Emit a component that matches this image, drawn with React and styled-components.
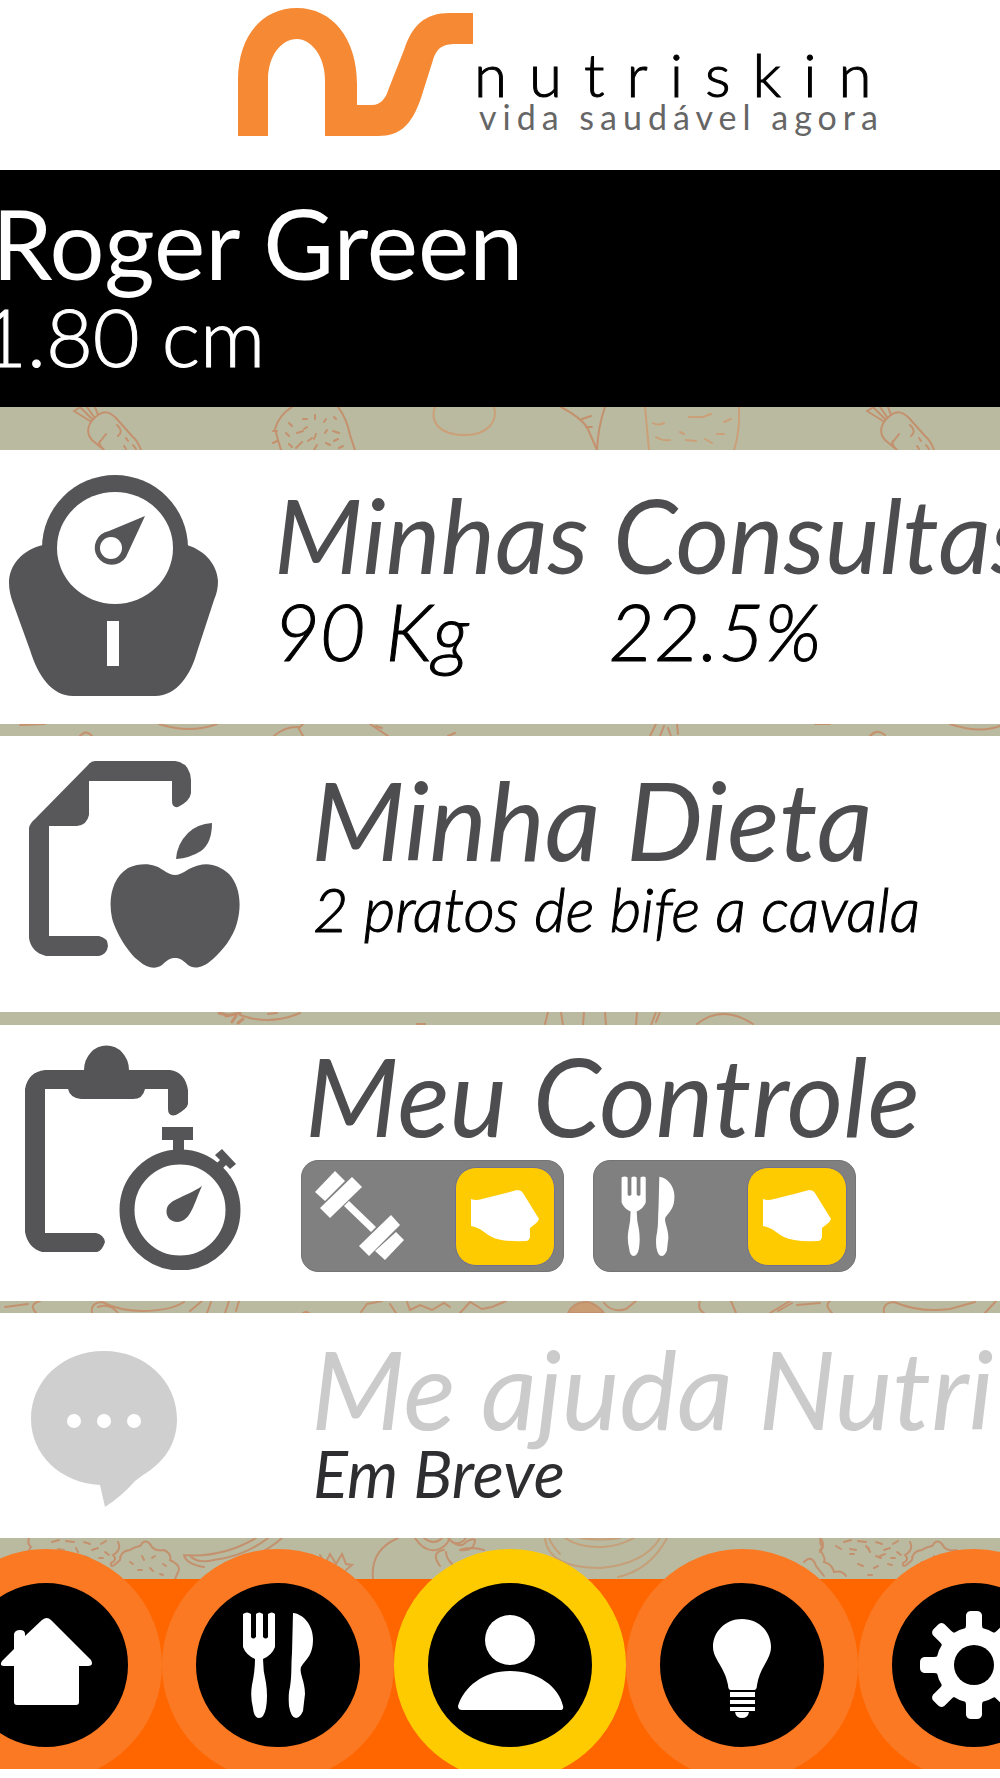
import React, { useState } from 'react';
import styled, { createGlobalStyle } from 'styled-components';

const NAV_ITEMS = [
  { id: 'home', label: 'Início' },
  { id: 'meals', label: 'Refeições' },
  { id: 'profile', label: 'Perfil', active: true },
  { id: 'tips', label: 'Dicas' },
  { id: 'settings', label: 'Ajustes' },
];

const App = () => (
  <Page>
    <GlobalStyle />

    <Header>
      <LogoMark />
      <LogoText>
        <LogoName>nutriskin</LogoName>
        <LogoTagline>vida saudável agora</LogoTagline>
      </LogoText>
    </Header>

    <Profile>
      <ProfileName>Roger Green</ProfileName>
      <ProfileHeight>1.80 cm</ProfileHeight>
    </Profile>

    <main>
      <Strip height={43}>
        <Doodles>
          <g id="carrot">
            <path d="M74 4L90 14M80 0L92 12M87 0L94 10M95 0L98 8M74 4L79 1M98 8C88 15 85 25 92 33L104 43M98 8C104 3 110 5 116 11L132 29Q138 34 141 43M104 43Q98 37 100 34M106 27L99 36M117 18Q124 24 118 29M126 31l2 3M124 39l2 3M133 38l3 4" />
          </g>
          <use href="#carrot" x="793" />
          <path d="M292 0Q279 8 275 22Q278 33 281 43M338 0Q347 12 350 28L355 43M273 36l4 -2M273 24l4 0M289 16l3 3M303 12l4 0M315 8l0 4M324 15l2 -3M286 26l3 3M297 26l6 -2M316 27l-2 5M325 26l2 -3M333 24l6 2M289 37l3 3M296 41l6 -6M308 34l4 -3M317 38l-3 5M326 36l4 2M334 34l4 -2M339 41l4 -2M304 22l3 -2M334 10l2 2" />
          <g stroke="#cba078">
            <path d="M435 0C430 14 438 28 465 28C488 28 498 14 494 0" />
            <path d="M645 0L649 43M739 0Q740 25 734 43M653 16Q658 19 664 16M689 10h14l8 -3M724 15l7 -3M656 30q6 4 14 3M680 25l4 2M686 33l10 1M705 32l7 4M717 27l7 0" />
          </g>
          <path d="M561 0Q580 10 587 20L597 43M605 0Q598 20 597 43M582 12L591 9M586 20L592 20" />
        </Doodles>
      </Strip>

      <Card height={274} column={274}>
        <IconCell top={24} left={9}>
          <ScaleIcon />
        </IconCell>
        <CardText top={29}>
          <CardTitle size={103}>Minhas Consultas</CardTitle>
          <Values>
            <span>90 Kg</span>
            <span>22.5%</span>
          </Values>
        </CardText>
      </Card>

      <Strip height={12}>
        <Doodles>
          <path d="M159 0Q190 10 217 0M20 1L45 0M80 12Q86 5 92 12M274 12Q285 2 300 3L303 0M298 3L303 12M370 0L388 12M376 2L382 4M448 12L455 9M650 12L656 0M660 12L664 2M668 4L671 12M677 0L678 10M870 12Q877 4 885 11M815 0L830 0M950 0Q980 10 1000 2" />
        </Doodles>
      </Strip>

      <Card height={276} column={311}>
        <IconCell top={24} left={29}>
          <DietIcon />
        </IconCell>
        <CardText top={28}>
          <CardTitle>Minha Dieta</CardTitle>
          <Meal>2 pratos de bife a cavala</Meal>
        </CardText>
      </Card>

      <Strip height={13}>
        <Doodles>
          <path
            strokeWidth="3"
            d="M219 1L227 3M226 4L240 1M232 10L236 4M238 11L243 7"
          />
          <path d="M240 3Q270 14 300 1M268 2L277 1M417 12L425 12M545 12L548 0M561 0L563 13M584 0L583 13M605 0L606 13M637 0L636 13M651 13L656 0M656 10L660 0M697 12Q722 -8 753 12" />
        </Doodles>
      </Strip>

      <Card height={276} column={305}>
        <IconCell top={20} left={25}>
          <ControlIcon />
        </IconCell>
        <CardText top={15}>
          <CardTitle>Meu Controle</CardTitle>
          <Switches>
            <Switch label="Treino">
              <DumbbellIcon />
            </Switch>
            <Switch label="Alimentação">
              <CutleryIcon width={54} height={80} />
            </Switch>
          </Switches>
        </CardText>
      </Card>

      <Strip height={12}>
        <Doodles>
          <path d="M5 6L28 3M40 0Q28 3 36 12M92 12Q90 2 102 1Q120 10 142 10Q170 10 184 1M98 6Q110 2 118 12M190 10L202 0M207 12L211 1M225 12L229 0M236 10L239 0M303 12Q306 10 309 12M361 11L367 3L382 0M390 3L396 12M407 1L410 9L420 4L432 9L444 2L450 6M460 12L470 1L482 8L492 6L506 0M604 2Q612 12 626 8L636 0M700 0Q697 8 704 12M731 0L736 12M770 12L790 0M778 10L792 2M797 4L820 2M830 0Q824 4 832 12M884 12Q882 2 894 1Q920 12 950 8L975 1M985 12L996 0" />
          <path fill="#c99c74" d="M568 12Q574 0 588 1Q598 4 604 12Z" />
        </Doodles>
      </Strip>

      <Card height={225} column={311}>
        <IconCell top={38} left={31}>
          <ChatIcon />
        </IconCell>
        <CardText top={20}>
          <CardTitle muted>Me ajuda Nutri</CardTitle>
          <Soon>Em Breve</Soon>
        </CardText>
      </Card>

      <Strip height={41}>
        <Doodles>
          <g id="broccoli">
            <path d="M29 0Q27 6 31 9L28 14M118 4Q122 12 113 17Q118 22 111 25Q110 32 120 22Q120 13 130 12Q134 9 140 8Q145 0 150 6Q154 14 164 12Q172 16 170 22Q182 28 178 34L175 41M52 4l7 -2M66 3l8 1M84 4l6 2M101 6l5 -3M58 11l6 1M76 10l2 4M92 12l6 -2M105 14l4 3M84 18l5 2M99 20l4 0M130 24l3 2M142 18l2 4M152 20l3 -2M138 32l4 0M150 30l3 3M163 26l3 2M160 36l3 1" />
          </g>
          <use href="#broccoli" x="792" />
          <path d="M820 0Q826 6 820 12Q826 20 824 24Q832 26 834 34Q842 32 846 38M804 24Q812 16 816 28L824 38M836 8l5 3M850 16l4 0M866 8l3 3M880 18l5 -2M858 26l5 2M874 30l4 -2M888 26l4 1M868 37l4 0" />
          <path d="M184 17Q222 20 256 0M184 17Q186 26 204 29M190 18Q198 26 214 22M214 22Q245 18 268 0M228 27Q262 18 282 0M320 17L325 26L330 16L336 26L342 16L346 26L352 27L346 32" />
          <path d="M373 41Q370 12 398 0M415 0Q424 14 436 12Q446 10 450 0M424 0Q434 8 442 0M448 0Q460 12 466 4Q472 0 475 2Q474 14 460 12M452 4Q460 8 466 0M460 12Q470 8 484 12M444 12Q430 14 440 28M446 14Q446 20 452 26" />
          <g stroke="#c59f78">
            <path d="M545 0Q548 30 600 30Q645 26 660 0M549 0Q552 8 560 16M565 0Q580 10 602 9Q620 8 634 0M580 0Q600 3 620 0M618 39Q650 32 667 0" />
          </g>
        </Doodles>
      </Strip>
    </main>

    <Nav aria-label="Principal">
      {NAV_ITEMS.map(({ id, label, active }) => (
        <NavLink
          key={id}
          href={`#${id}`}
          aria-label={label}
          aria-current={active ? 'page' : undefined}
          $active={active}
        >
          <NavIcon name={id} />
        </NavLink>
      ))}
    </Nav>
  </Page>
);

export default App;

const Switch = ({ label, children }) => {
  const [on, setOn] = useState(true);

  return (
    <SwitchBox>
      <SwitchInput
        type="checkbox"
        aria-label={label}
        checked={on}
        onChange={() => setOn(!on)}
      />
      <SwitchPicture>{children}</SwitchPicture>
      <Knob $on={on}>
        <FistIcon />
      </Knob>
    </SwitchBox>
  );
};

const Strip = ({ height, children }) => (
  <StripBox $height={height}>{children}</StripBox>
);

const Doodles = ({ children }) => (
  <svg width="1000" height="43" viewBox="0 0 1000 43" aria-hidden="true">
    <g fill="none" stroke="#c4916e" strokeWidth="2" strokeLinecap="round">
      {children}
    </g>
  </svg>
);

const Card = ({ height, column, children }) => (
  <CardBox $height={height} $column={column}>
    {children}
  </CardBox>
);

const IconCell = ({ top, left, children }) => (
  <IconBox $top={top} $left={left}>
    {children}
  </IconBox>
);

const CardText = ({ top, children }) => <TextBox $top={top}>{children}</TextBox>;

const CardTitle = ({ size = 109, muted, children }) => (
  <Title $size={size} $muted={muted}>
    {children}
  </Title>
);

const LogoMark = () => (
  <svg width="235" height="128" viewBox="238 8 235 128" aria-hidden="true">
    <path
      fill="#f68933"
      d="M238 136V80C238 36 262 8 297 8C332 8 357 38 357 84V105H372C381 105 386 98 389 88L404 50C412 26 424 13 450 13H473V44H456C442 44 437 48 433 60L421 98C412 124 401 136 378 136H325V80C325 56 311 39 297 39C281 39 268 56 268 80V136Z"
    />
  </svg>
);

const ScaleIcon = () => (
  <svg width="210" height="223" viewBox="9 24 210 223" aria-hidden="true">
    <g fill="#555557">
      <circle cx="115" cy="98" r="73" />
      <path d="M43 95C22 100 9 115 9 133Q9 142 13 153L30 200C38 226 52 246 73 246H155C177 246 191 224 197 202L214 150Q218 141 218 131C217 115 206 101 187 95Z" />
    </g>
    <ellipse cx="115" cy="98" rx="58" ry="56" fill="#fff" />
    <path
      fill="#555557"
      d="M145 66L109 81A17 17 0 1 0 126 107Z"
    />
    <circle cx="111" cy="98" r="11" fill="#fff" />
    <path fill="#fff" d="M107 171H119V216H107Z" />
  </svg>
);

const DietIcon = () => (
  <svg width="212" height="210" viewBox="29 20 212 210" aria-hidden="true">
    <g fill="#58585a">
      <path d="M95 21H175Q190 23 191 40V53Q190 61 178 67Q172 68 172 61V41H89V75Q87 85 77 86H49V196H99Q108 198 108 206Q107 214 99 216H46Q31 212 29 198V88Q30 83 35 79L88 25Q91 21 95 21Z" />
      <path d="M212 83Q212 103 201 111Q190 118 176 119Q177 104 188 93Q197 84 212 83Z" />
      <path d="M175 135Q180 135 189 129C204 121 217 123 229 134C240 146 242 165 237 183C233 198 222 211 213 219C202 229 193 229 188 225C182 219 179 218 175 218C171 218 168 219 162 225C155 230 147 228 139 221C128 213 115 191 112 178C108 159 112 138 128 128C144 121 156 125 163 130Q170 135 175 135Z" />
    </g>
  </svg>
);

const ControlIcon = () => (
  <svg width="216" height="225" viewBox="25 25 216 225" aria-hidden="true">
    <g fill="#555557">
      <path d="M45 50H84A22 24 0 0 1 129 50H170Q185 52 188 70V84Q187 89 176 95Q168 97 168 89V69H145Q143 79 133 79H81Q70 78 68 69H45V213H96Q104 215 105 222Q102 231 97 232H42Q28 228 25 212V69Q28 52 45 50Z" />
      <path d="M162 107H193V120H184V133H173V120H162Z" />
      <path d="M222 129L236 144L230 149L226 145L222 149L216 144L220 140L215 135Z" />
      <path d="M202 166C194 183 191 201 178 202C169 202 165 195 167 188C170 179 184 178 202 166Z" />
    </g>
    <circle
      cx="180"
      cy="190"
      r="53"
      fill="none"
      stroke="#555557"
      strokeWidth="15"
    />
  </svg>
);

const ChatIcon = () => (
  <svg width="146" height="156" viewBox="31 51 146 156" aria-hidden="true">
    <path
      fill="#cfcfcf"
      d="M104 51C146 51 177 82 177 119C177 145 163 163 143 175L135 181Q122 196 105 207L100 185C60 183 31 154 31 119C31 81 62 51 104 51Z"
    />
    <g fill="#fff">
      <circle cx="74" cy="121" r="7" />
      <circle cx="104" cy="121" r="7" />
      <circle cx="134" cy="121" r="7" />
    </g>
  </svg>
);

const DumbbellIcon = () => (
  <svg width="91" height="90" viewBox="12 12 91 90" aria-hidden="true">
    <g fill="#fff">
      <path d="M33 12L43 22L23 42L13 33Z" />
      <path d="M50 18L60 28L28 59L18 49Z" />
      <path d="M47 42L74 68L69 73L42 47Z" />
      <path d="M89 56L98 66L67 97L57 87Z" />
      <path d="M94 73L102 81L83 101L73 92Z" />
    </g>
  </svg>
);

const FistIcon = () => (
  <svg width="68" height="52" viewBox="173 30 68 52" aria-hidden="true">
    <path
      fill="#fff"
      d="M173 39Q178 41 184 39L208 33L219 30Q223 30 225 33L241 59Q240 62 237 64L232 68V77Q231 81 228 81Q203 82 194 77C187 74 184 68 173 66Z"
    />
  </svg>
);

const CutleryIcon = ({ width, height }) => (
  <svg width={width} height={height} viewBox="81 64 70 106" aria-hidden="true">
    <g fill="#fff">
      <path d="M81 66Q85 63 89 66V89Q91 92 94 89V66Q97 63 101 66V89Q104 92 106 89V66Q110 63 113 66V99Q110 107 101 111Q101 123 104 135Q106 148 104 160Q102 170 97 170Q92 170 91 160Q88 148 90 137Q93 123 93 111Q84 107 81 99Z" />
      <path d="M131 65C142 66 151 78 151 91C151 107 145 110 139 119C137 125 143 133 143 146Q142 154 141 163Q138 170 134 170Q129 170 127 158Q126 146 128 139C130 127 129 117 130 105Z" />
    </g>
  </svg>
);

const NavIcon = ({ name }) => {
  if (name === 'meals') {
    return <CutleryIcon width={70} height={106} />;
  }

  return (
    <svg width="164" height="164" viewBox="34 34 164 164" aria-hidden="true">
      <g fill="#fff">
        {name === 'home' && (
          <path d="M112 71Q117 67 121 71L161 111Q164 117 158 117H149V153Q149 156 146 156H87Q84 156 84 153V117H74Q69 117 72 112L84 100V85Q85 81 90 81Q95 81 95 85V87Z" />
        )}
        {name === 'profile' && (
          <>
            <circle cx="116" cy="91" r="25" />
            <path d="M68 161Q64 161 64 157C70 138 89 122 116 122C144 122 165 138 169 157Q170 161 166 161Z" />
          </>
        )}
        {name === 'tips' && (
          <>
            <path d="M116 70C133 70 145 83 145 98C145 110 134 118 131 136Q131 141 128 141H105Q102 141 102 136C99 118 87 110 87 98C87 83 99 70 116 70Z" />
            <path d="M104 143H129V148H104ZM104 151H129V155H104ZM104 158H129V162H104ZM109 163H123Q122 169 116 169Q110 169 109 163Z" />
          </>
        )}
        {name === 'settings' && (
          <>
            <circle cx="116" cy="116" r="38" />
            {[0, 45, 90, 135, 180, 225, 270, 315].map(angle => (
              <path
                key={angle}
                transform={`rotate(${angle} 116 116)`}
                d="M104 84Q108 80 108 76V66Q109 62 113 62H119Q123 62 124 66V76Q124 80 128 84Z"
              />
            ))}
            <circle cx="116" cy="116" r="20" fill="#000" />
          </>
        )}
      </g>
    </svg>
  );
};

const GlobalStyle = createGlobalStyle`
  body {
    margin: 0;
    background: #fff;
    font-family: Lato, 'Open Sans', sans-serif;
  }

  svg {
    display: block;
    flex-shrink: 0;
  }
`;

const Page = styled.div`
  overflow: hidden;
  padding-bottom: 9px;
`;

const Header = styled.header`
  display: flex;
  align-items: flex-end;
  padding: 8px 0 34px 238px;
`;

const LogoText = styled.div`
  padding-bottom: 4px;
  white-space: nowrap;
`;

const LogoName = styled.div`
  padding-left: 1px;
  font-size: 60px;
  font-weight: 300;
  line-height: 56px;
  letter-spacing: 22px;
  color: #000;
  -webkit-text-stroke: 1px #000;
`;

const LogoTagline = styled.div`
  padding-left: 6px;
  font-size: 34px;
  line-height: 30px;
  letter-spacing: 6px;
  color: #666;
`;

const Profile = styled.section`
  padding: 25px 0 26px;
  background: #000;
  color: #fff;
  white-space: nowrap;
`;

const ProfileName = styled.h1`
  margin: 0 0 0 -8px;
  font-size: 97px;
  font-weight: 400;
  line-height: 96px;
`;

const ProfileHeight = styled.p`
  margin: 0 0 0 -20px;
  font-size: 81px;
  font-weight: 300;
  line-height: 90px;
  -webkit-text-stroke: 1px #fff;
`;

const StripBox = styled.div`
  height: ${({ $height }) => $height}px;
  overflow: hidden;
  background: #babaa0;
`;

const CardBox = styled.section`
  display: grid;
  grid-template-columns: ${({ $column }) => $column}px 1fr;
  box-sizing: border-box;
  min-height: ${({ $height }) => $height}px;
  background: #fff;
`;

const IconBox = styled.div`
  padding: ${({ $top, $left }) => `${$top}px 0 0 ${$left}px`};
`;

const TextBox = styled.div`
  min-width: 0;
  padding-top: ${({ $top }) => $top}px;
  font-style: italic;
  white-space: nowrap;
`;

const Title = styled.h2`
  margin: 0;
  font-size: ${({ $size }) => $size}px;
  font-weight: 400;
  line-height: 110px;
  color: ${({ $muted }) => ($muted ? '#cbcbcb' : '#4d4d4f')};
`;

const Values = styled.div`
  display: flex;
  gap: 140px;
  font-size: 79px;
  font-weight: 300;
  line-height: 84px;
  color: #000;
  -webkit-text-stroke: 1px #000;
`;

const Meal = styled.div`
  padding-left: 2px;
  font-size: 61px;
  font-weight: 300;
  line-height: 70px;
  color: #000;
  -webkit-text-stroke: 1px #000;
`;

const Soon = styled.div`
  padding-left: 2px;
  font-size: 65px;
  line-height: 60px;
  color: #2e2e30;
`;

const Switches = styled.div`
  display: flex;
  gap: 29px;
  margin: 10px 0 0 -4px;
`;

const SwitchBox = styled.label`
  position: relative;
  display: flex;
  align-items: center;
  justify-content: space-between;
  box-sizing: border-box;
  width: 263px;
  height: 112px;
  padding: 0 8px 0 12px;
  border: 1px solid #747474;
  border-radius: 17px;
  background: #808080;
  cursor: pointer;
`;

const SwitchInput = styled.input`
  position: absolute;
  inset: 0;
  width: 100%;
  height: 100%;
  margin: 0;
  opacity: 0;
  cursor: pointer;
`;

const SwitchPicture = styled.span`
  display: flex;
  justify-content: center;
  min-width: 84px;
`;

const Knob = styled.span`
  display: flex;
  align-items: center;
  justify-content: center;
  box-sizing: border-box;
  width: 100px;
  height: 99px;
  border: 1px solid #6f6f94;
  border-radius: 21px;
  background: ${({ $on }) => ($on ? '#fecb00' : '#b5b5b5')};
`;

const Nav = styled.nav`
  display: flex;
  justify-content: center;
  height: 190px;
  padding-left: 20px;
  background: #ff6600;
  clip-path: inset(-30px 0 0 0);
`;

const NavLink = styled.a`
  position: relative;
  z-index: ${({ $active }) => ($active ? 1 : 0)};
  display: flex;
  flex-shrink: 0;
  align-items: center;
  justify-content: center;
  box-sizing: border-box;
  width: 232px;
  height: 232px;
  margin-top: -30px;
  border: 34px solid ${({ $active }) => ($active ? '#fecb00' : '#fa7922')};
  border-radius: 50%;
  background: #000;
`;
